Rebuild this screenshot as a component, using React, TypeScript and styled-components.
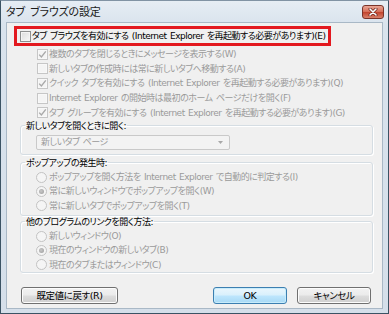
import React from 'react';
import styled, { createGlobalStyle } from 'styled-components';

const FONT = `"Noto Sans CJK JP", "Noto Sans", sans-serif`;
const MIXED = `"DejaVu Sans", "Noto Sans CJK JP", sans-serif`;
const GRAY = '#9a9a9a';

const GlobalStyle = createGlobalStyle`
  html, body { margin: 0; padding: 0; background: #ffffff; }
  body { font-family: ${FONT}; font-feature-settings: "palt" 1; }
  * { box-sizing: border-box; }
`;

const Window = styled.div`
  width: 389px;
  height: 314px;
  border: 1px solid #3b5364;
  border-top-color: #8193a4;
  background: linear-gradient(180deg, #e6edf4 0px, #d9e3ed 24px, #d5dfea 100%);
  display: flex;
  flex-direction: column;
`;

const TitleBar = styled.div`
  height: 21px;
  display: flex;
  align-items: center;
  justify-content: space-between;
  padding: 0 4px 2px 5px;
`;

const TitleText = styled.span`
  font-size: 11px;
  color: #1a1a1a;
  letter-spacing: -0.2px;
  word-spacing: 3px;
`;

const CloseButton = styled.div`
  width: 22px;
  height: 14px;
  margin-top: 2px;
  border-radius: 3px;
  border: 1px solid #7a3329;
  background: linear-gradient(180deg, #e9a696 0%, #d66e58 48%, #c2432d 52%, #d9806a 100%);
  display: flex;
  align-items: center;
  justify-content: center;
`;

const Panel = styled.div`
  flex: 1;
  margin: 0 5px 4px 5px;
  background: #f0f0f0;
  border: 1px solid #a9b8c6;
  display: flex;
  flex-direction: column;
`;

const Highlight = styled.div`
  margin: 3px 0 0 7px;
  width: 317px;
  height: 20px;
  border: 3px solid #e3191f;
  display: flex;
  align-items: center;
  padding-left: 3px;
  gap: 1px;
`;

const Text = styled.span<{ $disabled?: boolean }>`
  font-family: ${MIXED};
  font-size: 9px;
  letter-spacing: -0.5px;
  word-spacing: 1px;
  line-height: 12px;
  white-space: nowrap;
  color: ${(p) => (p.$disabled ? GRAY : '#000000')};
`;

const CheckBox = styled.span<{ $disabled?: boolean }>`
  width: 11px;
  height: 11px;
  flex: none;
  border: 1px solid ${(p) => (p.$disabled ? '#c6c6c6' : '#8e8f8f')};
  background: ${(p) =>
    p.$disabled ? '#f4f4f4' : 'linear-gradient(135deg, #dcdcdc, #f8f8f8)'};
  box-shadow: inset 0 0 0 1px ${(p) => (p.$disabled ? '#f8f8f8' : '#f4f4f4')};
  display: flex;
  align-items: center;
  justify-content: center;
`;

const OptionList = styled.div`
  display: flex;
  flex-direction: column;
  padding: 1px 0 0 30px;
`;

const CheckRow = styled.div`
  height: 14.6px;
  display: flex;
  align-items: center;
  gap: 1px;
`;

const Group = styled.fieldset<{ $bottom: number; $top: number }>`
  margin: ${(p) => p.$top}px 9px 0 13px;
  padding: 0 0 ${(p) => p.$bottom}px 4px;
  min-inline-size: 0;
  border: 1px solid #d5dde3;
  border-radius: 3px;
  box-shadow: inset 1px 1px 0 #ffffff, 1px 1px 0 #ffffff;
  display: flex;
  flex-direction: column;
`;

const Legend = styled.legend`
  padding: 0 1px;
  font-family: ${MIXED};
  font-size: 9px;
  letter-spacing: -0.5px;
  line-height: 12px;
  color: #000000;
  white-space: nowrap;
`;

const Select = styled.div`
  margin: 3px 0 0 11px;
  width: 194px;
  height: 15px;
  border: 1px solid #c9c9c9;
  border-radius: 2px;
  background: #f3f3f3;
  display: flex;
  align-items: center;
  justify-content: space-between;
  padding: 0 6px 0 4px;
`;

const RadioList = styled.div<{ $top: number }>`
  display: flex;
  flex-direction: column;
  padding: ${(p) => p.$top}px 0 0 11px;
`;

const RadioRow = styled.div`
  height: 14.3px;
  display: flex;
  align-items: center;
  gap: 2px;
`;

const Radio = styled.span<{ $checked?: boolean }>`
  width: 11px;
  height: 11px;
  flex: none;
  border-radius: 50%;
  border: 1px solid #c3c3c3;
  background: #f5f5f5;
  display: flex;
  align-items: center;
  justify-content: center;
  &::after {
    content: '';
    display: ${(p) => (p.$checked ? 'block' : 'none')};
    width: 5px;
    height: 5px;
    border-radius: 50%;
    background: radial-gradient(circle at 40% 40%, #c8c8c8, #9a9a9a);
  }
`;

const ButtonBar = styled.div`
  margin: 14px 11px 0 14px;
  display: flex;
  align-items: center;
  gap: 10px;
`;

const Button = styled.div<{ $default?: boolean; $w: number }>`
  width: ${(p) => p.$w}px;
  height: 17px;
  border-radius: 3px;
  border: 1px solid ${(p) => (p.$default ? '#3c7fb1' : '#707070')};
  background: ${(p) =>
    p.$default
      ? 'linear-gradient(180deg, #eaf6fd 0%, #d9f0fc 48%, #bee6fd 52%, #a7d9f5 100%)'
      : 'linear-gradient(180deg, #f2f2f2 0%, #ebebeb 48%, #dddddd 52%, #cfcfcf 100%)'};
  box-shadow: inset 0 0 0 1px ${(p) => (p.$default ? '#c8ecfb' : '#fcfcfc')};
  display: flex;
  align-items: center;
  justify-content: center;
  font-family: ${MIXED};
  font-size: 9.5px;
  letter-spacing: -0.4px;
  color: #000000;
  white-space: nowrap;
`;

const Spacer = styled.div`
  flex: 1;
`;

const Check = () => (
  <svg width="9" height="9" viewBox="0 0 9 9">
    <path d="M1.2 4.6 L3.4 7 L7.8 1.4" fill="none" stroke="#a9a9a9" strokeWidth="1.4" />
  </svg>
);

const subOptions = [
  { checked: true, label: '複数のタブを閉じるときにメッセージを表示する(W)' },
  { checked: false, label: '新しいタブの作成時には常に新しいタブへ移動する(A)' },
  { checked: true, label: 'クイック タブを有効にする (Internet Explorer を再起動する必要があります)(Q)' },
  { checked: false, label: 'Internet Explorer の開始時は最初のホーム ページだけを開く(F)' },
  { checked: true, label: 'タブ グループを有効にする (Internet Explorer を再起動する必要があります)(G)' },
];

const popupOptions = [
  { checked: false, label: 'ポップアップを開く方法を Internet Explorer で自動的に判定する(I)' },
  { checked: true, label: '常に新しいウィンドウでポップアップを開く(W)' },
  { checked: false, label: '常に新しいタブでポップアップを開く(T)' },
];

const linkOptions = [
  { checked: false, label: '新しいウィンドウ(O)' },
  { checked: true, label: '現在のウィンドウの新しいタブ(B)' },
  { checked: false, label: '現在のタブまたはウィンドウ(C)' },
];

export default function App() {
  return (
    <>
      <GlobalStyle />
      <Window>
        <TitleBar>
          <TitleText>タブ ブラウズの設定</TitleText>
          <CloseButton>
            <svg width="10" height="8" viewBox="0 0 10 8">
              <path d="M2 1 L8 7 M8 1 L2 7" stroke="#6a2219" strokeWidth="3" strokeLinecap="round" />
              <path d="M2 1 L8 7 M8 1 L2 7" stroke="#ffffff" strokeWidth="1.6" strokeLinecap="round" />
            </svg>
          </CloseButton>
        </TitleBar>
        <Panel>
          <Highlight>
            <CheckBox />
            <Text>タブ ブラウズを有効にする (Internet Explorer を再起動する必要があります)(E)</Text>
          </Highlight>
          <OptionList>
            {subOptions.map((o) => (
              <CheckRow key={o.label}>
                <CheckBox $disabled>{o.checked && <Check />}</CheckBox>
                <Text $disabled>{o.label}</Text>
              </CheckRow>
            ))}
          </OptionList>
          <Group $top={0} $bottom={4}>
            <Legend>新しいタブを開くときに開く:</Legend>
            <Select>
              <Text $disabled>新しいタブ ページ</Text>
              <svg width="5" height="3" viewBox="0 0 5 3">
                <path d="M0 0 H5 L2.5 3 Z" fill="#a8a8a8" />
              </svg>
            </Select>
          </Group>
          <Group $top={2} $bottom={2}>
            <Legend>ポップアップの発生時:</Legend>
            <RadioList $top={1}>
              {popupOptions.map((o) => (
                <RadioRow key={o.label}>
                  <Radio $checked={o.checked} />
                  <Text $disabled>{o.label}</Text>
                </RadioRow>
              ))}
            </RadioList>
          </Group>
          <Group $top={0} $bottom={0}>
            <Legend>他のプログラムのリンクを開く方法:</Legend>
            <RadioList $top={1}>
              {linkOptions.map((o) => (
                <RadioRow key={o.label}>
                  <Radio $checked={o.checked} />
                  <Text $disabled>{o.label}</Text>
                </RadioRow>
              ))}
            </RadioList>
          </Group>
          <ButtonBar>
            <Button $w={97}>既定値に戻す(R)</Button>
            <Spacer />
            <Button $w={74} $default>OK</Button>
            <Button $w={74}>キャンセル</Button>
          </ButtonBar>
        </Panel>
      </Window>
    </>
  );
}
